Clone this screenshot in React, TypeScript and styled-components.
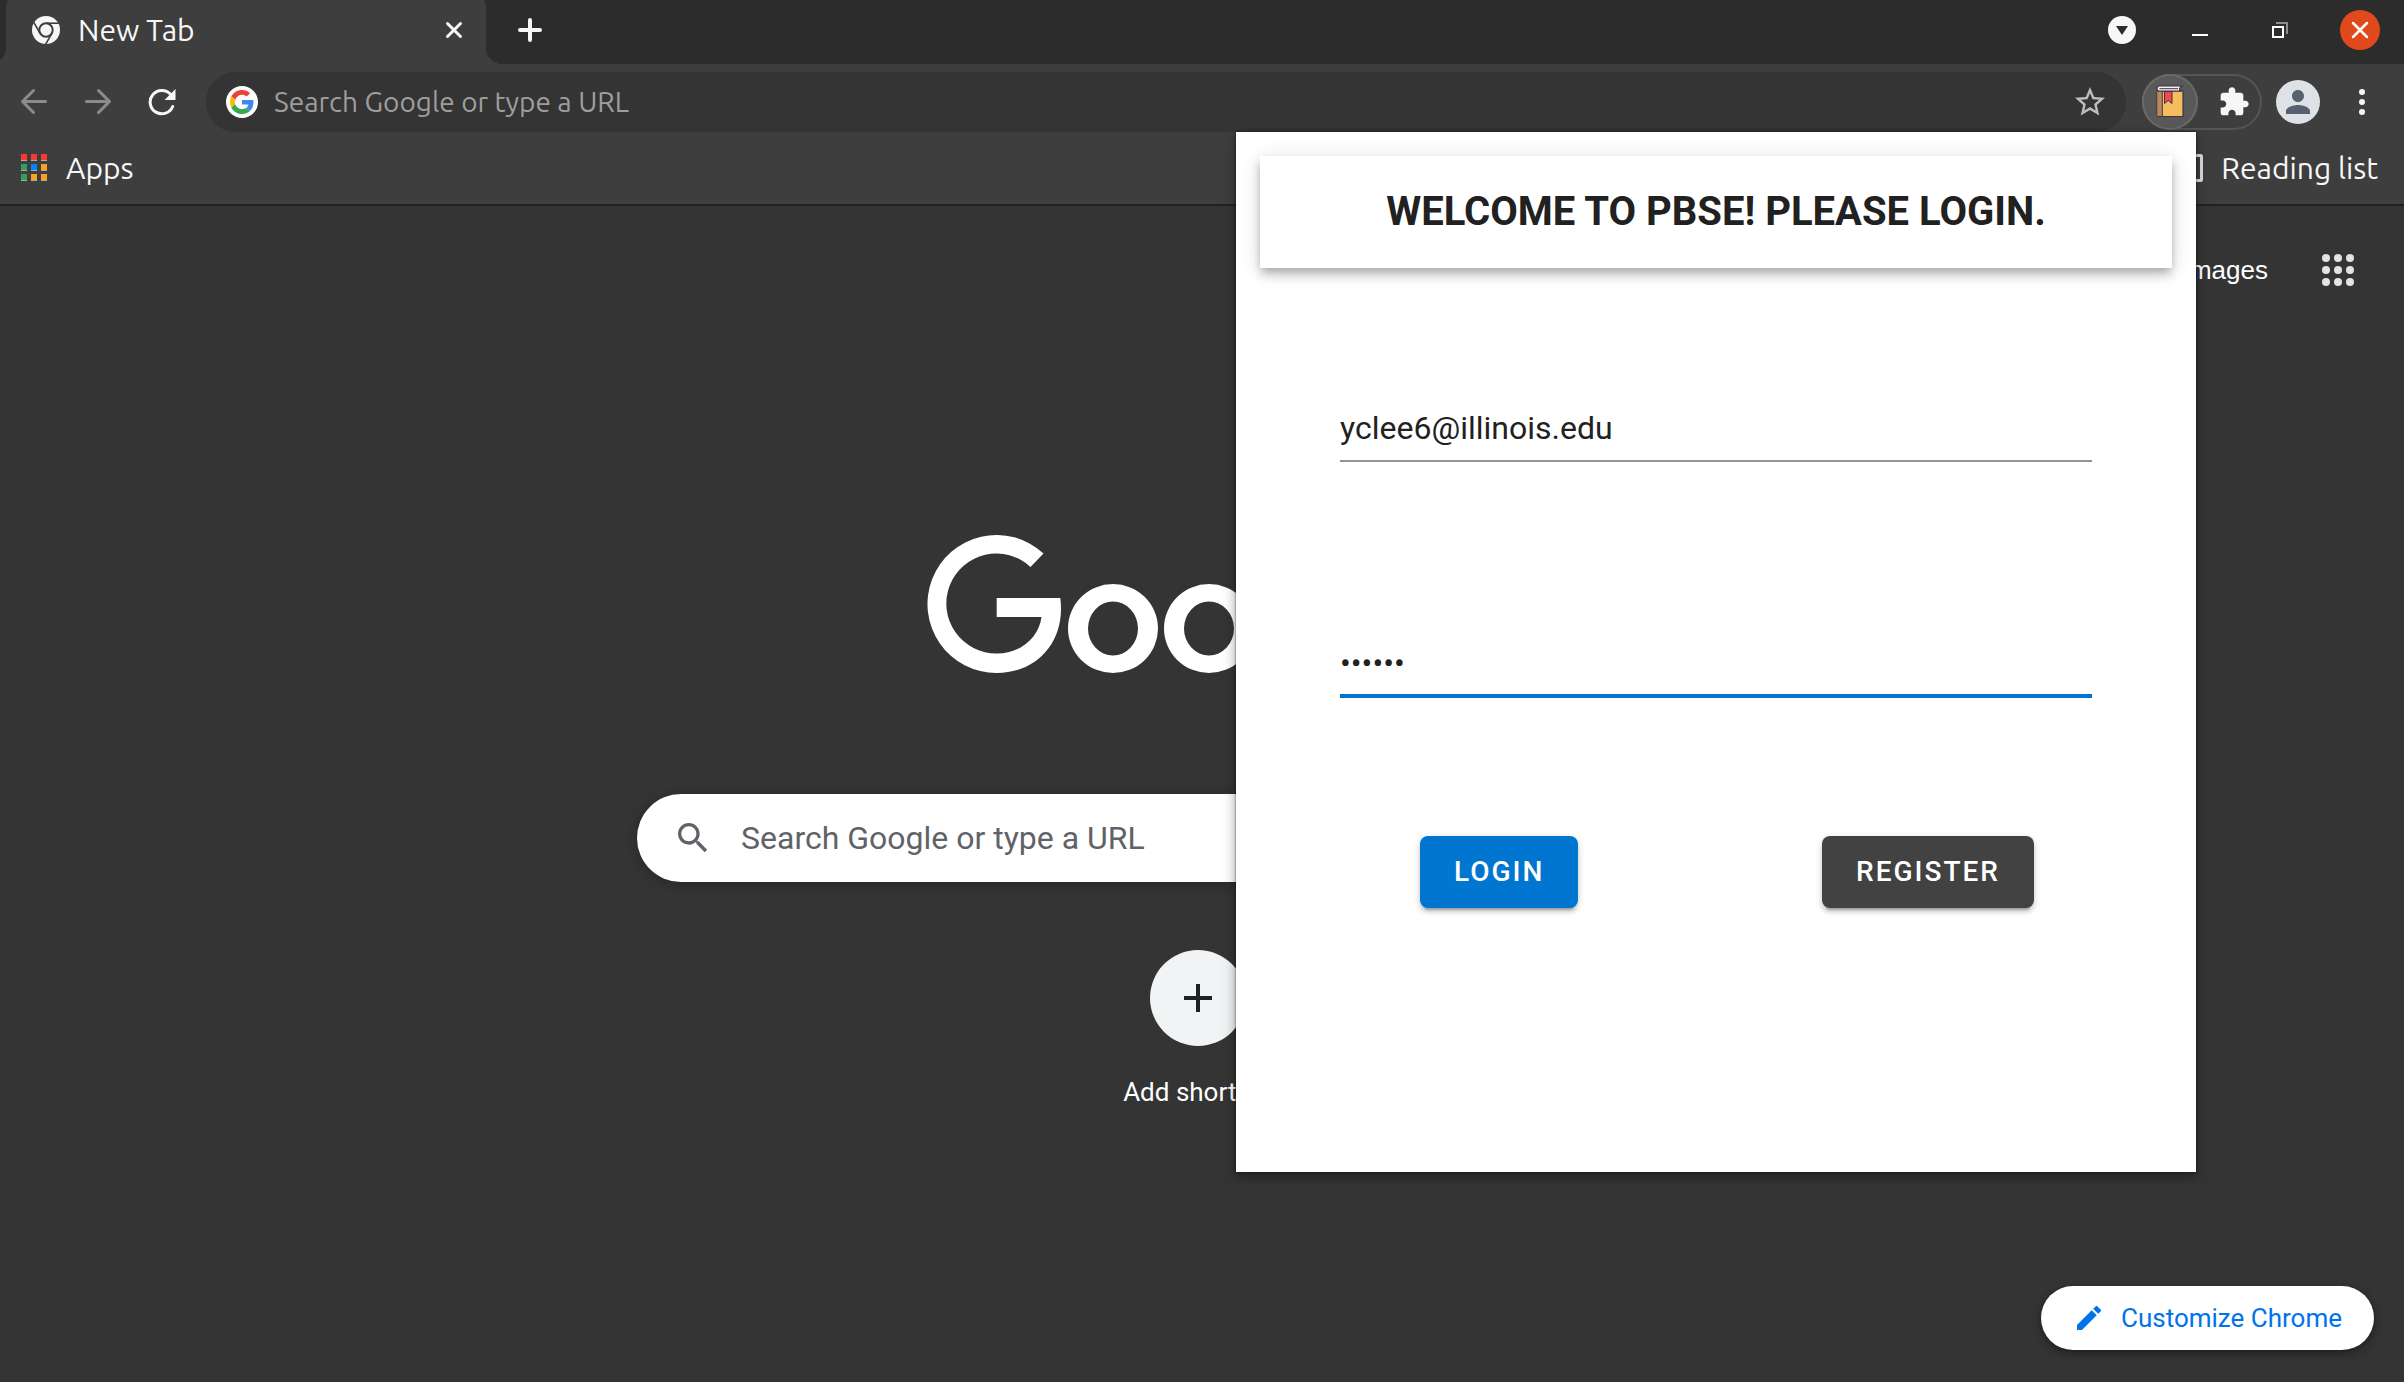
import React, { useState } from "react";
import styled, { createGlobalStyle } from "styled-components";

const ubuntu = `Ubuntu, "Noto Sans", "Open Sans", sans-serif`;
const roboto = `Roboto, "Liberation Sans", sans-serif`;
const arial = `"Liberation Sans", Arial, sans-serif`;

const GlobalStyle = createGlobalStyle`
  *, *::before, *::after { box-sizing: border-box; }
  body { margin: 0; background: #343434; }
  button, input { font: inherit; color: inherit; }
  button { padding: 0; border: 0; background: none; cursor: pointer; }
  svg { display: block; flex: none; }
`;

const Browser = styled.div`
  position: relative;
  display: flex;
  flex-direction: column;
  min-height: 100vh;
  overflow: hidden;
  color: #f7f7f7;
  font-family: ${ubuntu};
  font-size: 30px;
  line-height: 36px;
`;

const TabStrip = styled.header`
  display: flex;
  align-items: center;
  height: 64px;
  padding: 0 24px 4px 6px;
  overflow: hidden;
  background: #2c2c2c;
`;

const Tab = styled.div`
  position: relative;
  display: flex;
  align-items: center;
  width: 480px;
  height: 76px;
  padding: 0 22px 0 26px;
  border-radius: 16px 16px 0 0;
  background: #3e3e3e;

  &::before,
  &::after {
    content: "";
    position: absolute;
    bottom: 4px;
    width: 16px;
    height: 16px;
  }
  &::before {
    right: 100%;
    background: radial-gradient(circle at 0 0, transparent 16px, #3e3e3e 16px);
  }
  &::after {
    left: 100%;
    background: radial-gradient(circle at 100% 0, transparent 16px, #3e3e3e 16px);
  }
`;

const TabTitle = styled.span`
  flex: 1;
  margin-left: 18px;
`;

const IconButton = styled.button<{ $size?: number }>`
  display: flex;
  flex: none;
  align-items: center;
  justify-content: center;
  width: ${(p) => p.$size ?? 40}px;
  height: ${(p) => p.$size ?? 40}px;
  border-radius: 50%;
`;

const NewTabButton = styled(IconButton)`
  margin-left: 24px;
`;

const WindowControls = styled.div`
  display: flex;
  align-items: center;
  gap: 40px;
  margin-left: auto;
`;

const SearchTabs = styled(IconButton)`
  margin-right: -2px;
`;

const CloseWindow = styled(IconButton)`
  background: #e0491b;
`;

const Toolbar = styled.div`
  display: flex;
  align-items: center;
  height: 68px;
  padding: 8px 22px 0 14px;
  background: #3e3e3e;
`;

const NavButtons = styled.nav`
  display: flex;
  gap: 24px;
  margin-right: 24px;
`;

const Omnibox = styled.label`
  display: flex;
  flex: 1;
  align-items: center;
  height: 60px;
  padding: 0 16px 0 20px;
  border-radius: 30px;
  background: #343434;
  font-size: 28px;
`;

const OmniboxInput = styled.input`
  flex: 1;
  min-width: 0;
  margin: 0 16px;
  padding: 0;
  border: 0;
  outline: 0;
  background: none;

  &::placeholder {
    color: #9e9e9e;
    opacity: 1;
  }
`;

const Extensions = styled.div`
  display: flex;
  justify-content: space-between;
  width: 120px;
  height: 56px;
  margin: 0 14px 0 16px;
  border-radius: 28px;
  box-shadow: inset 0 0 0 2px #555555;
`;

const ActiveExtension = styled(IconButton)`
  background: #595959;
  box-shadow: inset 0 0 0 2px #696969;
`;

const Avatar = styled(IconButton)`
  margin-right: 22px;
  background: #dee1e6;
`;

const BookmarksBar = styled.nav`
  display: flex;
  align-items: center;
  justify-content: space-between;
  height: 74px;
  padding: 0 26px 0 20px;
  border-bottom: 2px solid #222222;
  background: #3e3e3e;
`;

const Bookmark = styled.button`
  display: flex;
  align-items: center;
  gap: 18px;
`;

const Page = styled.main`
  display: flex;
  flex: 1;
  flex-direction: column;
  align-items: center;
  padding: 0 30px 32px 22px;
  background: #343434;
  font-family: ${roboto};
`;

const PageLinks = styled.nav`
  display: flex;
  align-items: center;
  align-self: flex-end;
  gap: 50px;
  height: 128px;
  padding-right: 16px;
  font-family: ${arial};
  font-size: 26px;
`;

const PageLink = styled.a`
  color: #ffffff;
  text-decoration: none;
`;

const Logo = styled.svg`
  margin-top: 200px;
`;

const SearchBox = styled.label`
  display: flex;
  align-items: center;
  width: 1122px;
  max-width: 100%;
  height: 88px;
  margin-top: 120px;
  padding: 0 36px;
  border-radius: 44px;
  background: #ffffff;
  box-shadow: 0 2px 12px rgba(0, 0, 0, 0.28);
`;

const SearchInput = styled.input`
  flex: 1;
  min-width: 0;
  margin-left: 28px;
  padding: 0;
  border: 0;
  outline: 0;
  background: none;
  color: #202124;
  font-size: 32px;

  &::placeholder {
    color: #5f6368;
    opacity: 1;
  }
`;

const Shortcut = styled.button`
  display: flex;
  flex-direction: column;
  align-items: center;
  gap: 28px;
  margin-top: 68px;
  color: #ffffff;
  font-size: 26px;
`;

const ShortcutDisc = styled.span`
  display: flex;
  align-items: center;
  justify-content: center;
  width: 96px;
  height: 96px;
  border-radius: 50%;
  background: #f1f3f4;
`;

const Customize = styled.button`
  display: flex;
  align-items: center;
  align-self: flex-end;
  gap: 16px;
  height: 64px;
  margin-top: auto;
  padding: 0 32px;
  border-radius: 32px;
  background: #ffffff;
  box-shadow: 0 2px 6px rgba(0, 0, 0, 0.3), 0 4px 12px rgba(0, 0, 0, 0.2);
  color: #0073eb;
  font-size: 26px;
`;

const Popup = styled.section`
  position: absolute;
  top: 132px;
  right: 208px;
  display: flex;
  flex-direction: column;
  width: 960px;
  height: 1040px;
  padding: 24px;
  background: #ffffff;
  box-shadow: 0 0 2px rgba(0, 0, 0, 0.6), 0 4px 12px rgba(0, 0, 0, 0.4);
  color: #212121;
  font-family: ${roboto};
`;

const Banner = styled.h1`
  display: flex;
  align-items: center;
  justify-content: center;
  height: 112px;
  margin: 0;
  background: #ffffff;
  box-shadow: 0 4px 8px -2px rgba(0, 0, 0, 0.2), 0 8px 10px rgba(0, 0, 0, 0.14),
    0 2px 20px rgba(0, 0, 0, 0.12);
  font-size: 40px;
  font-weight: 700;
  line-height: 48px;
`;

const LoginForm = styled.form`
  display: flex;
  flex-direction: column;
  gap: 170px;
  padding: 128px 80px 0;
`;

const Field = styled.input<{ $active?: boolean }>`
  width: 100%;
  height: 66px;
  padding: 0 0 ${(p) => (p.$active ? 4 : 2)}px;
  border: 0;
  outline: 0;
  background: none;
  box-shadow: inset 0 ${(p) => (p.$active ? "-4px #0076d1" : "-2px #949494")};
  font-size: 32px;
`;

const Actions = styled.div`
  display: flex;
  justify-content: space-between;
  margin-top: -32px;
  padding: 0 58px 0 80px;
`;

const ActionButton = styled.button<{ $color: string }>`
  height: 72px;
  padding: 0 34px;
  border-radius: 8px;
  background: ${(p) => p.$color};
  box-shadow: 0 6px 2px -4px rgba(0, 0, 0, 0.2), 0 4px 4px rgba(0, 0, 0, 0.14),
    0 2px 10px rgba(0, 0, 0, 0.12);
  color: #ffffff;
  font-size: 28px;
  font-weight: 500;
  letter-spacing: 2px;
`;

const ChromeIcon = () => (
  <svg width="28" height="28" viewBox="0 0 28 28">
    <circle cx="14" cy="14" r="14" fill="#f7f7f7" />
    <circle cx="14" cy="14" r="6.7" fill="#f7f7f7" stroke="#3e3e3e" strokeWidth="2" />
    {[0, 120, 240].map((a) => (
      <path key={a} d="M14 7.2H27" stroke="#3e3e3e" strokeWidth="1.6" transform={`rotate(${a} 14 14)`} />
    ))}
  </svg>
);

const GoogleBadge = () => (
  <svg width="32" height="32" viewBox="0 0 32 32">
    <circle cx="16" cy="16" r="16" fill="#fff" />
    <g transform="translate(4 4) scale(.5)">
      <path fill="#EA4335" d="M24 9.5c3.54 0 6.71 1.22 9.21 3.6l6.85-6.85C35.9 2.38 30.47 0 24 0 14.62 0 6.51 5.38 2.56 13.22l7.98 6.19C12.43 13.72 17.74 9.5 24 9.5z" />
      <path fill="#4285F4" d="M46.98 24.55c0-1.57-.15-3.09-.38-4.55H24v9.02h12.94c-.58 2.96-2.26 5.48-4.78 7.18l7.73 6c4.51-4.18 7.09-10.36 7.09-17.65z" />
      <path fill="#FBBC05" d="M10.53 28.59c-.48-1.45-.76-2.99-.76-4.59s.27-3.14.76-4.59l-7.98-6.19C.92 16.46 0 20.12 0 24c0 3.88.92 7.54 2.56 10.78l7.97-6.19z" />
      <path fill="#34A853" d="M24 48c6.48 0 11.93-2.13 15.89-5.81l-7.73-6c-2.15 1.45-4.92 2.3-8.16 2.3-6.26 0-11.57-4.22-13.47-9.91l-7.98 6.19C6.51 42.62 14.62 48 24 48z" />
    </g>
  </svg>
);

const ArrowIcon = ({ forward }: { forward?: boolean }) => (
  <svg width="28" height="28" viewBox="0 0 28 28" fill="none" stroke="#8c8c8c" strokeWidth="3" strokeLinecap="round" strokeLinejoin="round">
    <path d={forward ? "M2.5 13.5H25.5M14.5 2.5L25.5 13.5L14.5 24.5" : "M25.5 13.5H2.5M13.5 2.5L2.5 13.5L13.5 24.5"} />
  </svg>
);

const Glyph = ({ d, size, color }: { d: string; size: number; color: string }) => (
  <svg width={size} height={size} viewBox="0 0 24 24" fill={color}>
    <path d={d} />
  </svg>
);

const paths = {
  star: "M22 9.24l-7.19-.62L12 2 9.19 8.63 2 9.24l5.46 4.73L5.82 21 12 17.27 18.18 21l-1.63-7.03L22 9.24zM12 15.4l-3.76 2.27 1-4.28-3.32-2.88 4.38-.38L12 6.1l1.71 4.04 4.38.38-3.32 2.88 1 4.28L12 15.4z",
  puzzle: "M20.5 11H19V7c0-1.1-.9-2-2-2h-4V3.5C13 2.12 11.88 1 10.5 1S8 2.12 8 3.5V5H4c-1.1 0-1.99.9-1.99 2v3.8H3.5c1.49 0 2.7 1.21 2.7 2.7s-1.21 2.7-2.7 2.7H2V20c0 1.1.9 2 2 2h3.8v-1.5c0-1.49 1.21-2.7 2.7-2.7 1.49 0 2.7 1.21 2.7 2.7V22H17c1.1 0 2-.9 2-2v-4h1.5c1.38 0 2.5-1.12 2.5-2.5S21.88 11 20.5 11z",
  person: "M12 12c2.21 0 4-1.79 4-4s-1.79-4-4-4-4 1.79-4 4 1.79 4 4 4zm0 2c-2.67 0-8 1.34-8 4v2h16v-2c0-2.66-5.33-4-8-4z",
  search: "M15.5 14h-.79l-.28-.27C15.41 12.59 16 11.11 16 9.5 16 5.91 13.09 3 9.5 3S3 5.91 3 9.5 5.91 16 9.5 16c1.61 0 3.09-.59 4.23-1.57l.27.28v.79l5 4.99L20.49 19l-4.99-5zm-6 0C7.01 14 5 11.99 5 9.5S7.01 5 9.5 5 14 7.01 14 9.5 11.99 14 9.5 14z",
  edit: "M3 17.25V21h3.75L17.81 9.94l-3.75-3.75L3 17.25zM20.71 7.04c.39-.39.39-1.02 0-1.41l-2.34-2.34c-.39-.39-1.02-.39-1.41 0l-1.83 1.83 3.75 3.75 1.83-1.83z",
};

const ReloadIcon = () => (
  <svg width="28" height="28" viewBox="0 0 28 28">
    <path d="M24.7 18.5A11.7 11.7 0 1 1 22.5 6.2" fill="none" stroke="#f7f7f7" strokeWidth="3" strokeLinecap="round" />
    <path d="M27.5 1V12H16.5z" fill="#f7f7f7" />
  </svg>
);

const BookIcon = () => (
  <svg width="28" height="34" viewBox="0 0 28 34">
    <path d="M1 6H27V31.5H2.5Q1 31.5 1 30z" fill="#f6bd5e" stroke="#3a3549" strokeWidth="1.2" />
    <path d="M1.5 6.5H6V31H2.5Q1.5 31 1.5 30z" fill="#bd8860" />
    <path d="M6.3 6.5V31" stroke="#3a3549" strokeWidth="1" />
    <path d="M26 1H3Q1 1 1 3.5T3 6.2H24.5Q22 3.5 26 1z" fill="#f7ece9" stroke="#3a3549" strokeWidth="1.2" />
    <path d="M3.5 3.7H22" stroke="#3a3549" strokeWidth="1" />
    <path d="M8.5 6.5H16V18.5L12.2 15.5L8.5 18.5z" fill="#f5474f" stroke="#3a3549" strokeWidth="1" />
  </svg>
);

const DotGrid = () => (
  <svg width="32" height="32" viewBox="0 0 32 32" fill="#e3e3e3">
    {[4, 16, 28].flatMap((y) => [4, 16, 28].map((x) => <circle key={`${x}-${y}`} cx={x} cy={y} r="4" />))}
  </svg>
);

const appColors = ["#f53b35", "#f53b35", "#f53b35", "#33a05a", "#0087f5", "#f7a31c", "#33a05a", "#f7a31c", "#f7a31c"];

const AppsIcon = () => (
  <svg width="28" height="28" viewBox="0 0 28 28">
    {appColors.map((c, i) => {
      const x = 1 + (i % 3) * 10;
      const y = Math.floor(i / 3) * 10;
      return (
        <g key={i}>
          <rect x={x} y={y + 1} width="6" height="6" fill="#a9a9a9" />
          <rect x={x} y={y} width="6" height="6" fill={c} />
        </g>
      );
    })}
  </svg>
);

const ring = (cx: number) =>
  `M${cx - 45} 94.5a45 44.5 0 1 0 90 0a45 44.5 0 1 0 -90 0zM${cx - 25} 94.5a25 27 0 1 0 50 0a25 27 0 1 0 -50 0z`;

export default function App() {
  const [email, setEmail] = useState("yclee6@illinois.edu");
  const [password, setPassword] = useState("secret");

  return (
    <Browser>
      <GlobalStyle />
      <TabStrip>
        <Tab>
          <ChromeIcon />
          <TabTitle>New Tab</TabTitle>
          <IconButton $size={20} aria-label="Close tab">
            <svg width="18" height="18" viewBox="0 0 18 18" stroke="#f7f7f7" strokeWidth="3" strokeLinecap="round">
              <path d="M2.5 2.5L15.5 15.5M15.5 2.5L2.5 15.5" />
            </svg>
          </IconButton>
        </Tab>
        <NewTabButton aria-label="New tab">
          <svg width="24" height="24" viewBox="0 0 24 24" stroke="#f7f7f7" strokeWidth="4" strokeLinecap="round">
            <path d="M12 2V22M2 12H22" />
          </svg>
        </NewTabButton>
        <WindowControls>
          <SearchTabs aria-label="Search tabs">
            <svg width="28" height="28" viewBox="0 0 28 28">
              <circle cx="14" cy="14" r="14" fill="#f7f7f7" />
              <path d="M8 10H20L14 19z" fill="#2c2c2c" />
            </svg>
          </SearchTabs>
          <IconButton aria-label="Minimize">
            <svg width="16" height="16" viewBox="0 0 16 16">
              <path d="M0 13H16" stroke="#fff" strokeWidth="2" />
            </svg>
          </IconButton>
          <IconButton aria-label="Restore">
            <svg width="16" height="16" viewBox="0 0 16 16" fill="none" strokeWidth="2">
              <path d="M4 1H15V12" stroke="#8e8e8e" />
              <rect x="1" y="5" width="10" height="10" stroke="#fff" />
            </svg>
          </IconButton>
          <CloseWindow aria-label="Close">
            <svg width="18" height="18" viewBox="0 0 18 18" stroke="#fff" strokeWidth="2.5" strokeLinecap="round">
              <path d="M2 2L16 16M16 2L2 16" />
            </svg>
          </CloseWindow>
        </WindowControls>
      </TabStrip>

      <Toolbar>
        <NavButtons aria-label="History">
          <IconButton aria-label="Back"><ArrowIcon /></IconButton>
          <IconButton aria-label="Forward"><ArrowIcon forward /></IconButton>
          <IconButton aria-label="Reload"><ReloadIcon /></IconButton>
        </NavButtons>
        <Omnibox>
          <GoogleBadge />
          <OmniboxInput aria-label="Address" placeholder="Search Google or type a URL" />
          <IconButton aria-label="Bookmark this tab">
            <Glyph d={paths.star} size={36} color="#bdbdbd" />
          </IconButton>
        </Omnibox>
        <Extensions>
          <ActiveExtension $size={56} aria-label="PBSE extension"><BookIcon /></ActiveExtension>
          <IconButton $size={56} aria-label="Extensions">
            <Glyph d={paths.puzzle} size={32} color="#f7f7f7" />
          </IconButton>
        </Extensions>
        <Avatar $size={44} aria-label="Profile">
          <Glyph d={paths.person} size={36} color="#56606f" />
        </Avatar>
        <IconButton aria-label="Menu">
          <svg width="6" height="26" viewBox="0 0 6 26" fill="#f7f7f7">
            <circle cx="3" cy="3" r="3" />
            <circle cx="3" cy="13" r="3" />
            <circle cx="3" cy="23" r="3" />
          </svg>
        </IconButton>
      </Toolbar>

      <BookmarksBar aria-label="Bookmarks">
        <Bookmark><AppsIcon />Apps</Bookmark>
        <Bookmark>
          <svg width="28" height="28" viewBox="0 0 28 28" fill="none" stroke="#e0e0e0" strokeWidth="3">
            <rect x="1.5" y="1.5" width="25" height="25" rx="1" />
            <path d="M7 9H19M7 14H19M7 19H14" />
          </svg>
          Reading list
        </Bookmark>
      </BookmarksBar>

      <Page>
        <PageLinks aria-label="Google">
          <PageLink href="#images">Images</PageLink>
          <IconButton aria-label="Google apps"><DotGrid /></IconButton>
        </PageLinks>
        <Logo width="544" height="140" viewBox="0 0 544 140" fill="#fff" fillRule="evenodd" role="img" aria-label="Google">
          <path d="M117.500 19.500A69 69 0 1 0 71 139C108 139 135 112 135 75Q135 69 134.300 64H70.700V83H115.500C113 103 95 119.500 71 119.500A50 50 0 1 1 104.500 33z" />
          <path d={ring(187)} />
          <path d={ring(283)} />
        </Logo>
        <SearchBox>
          <Glyph d={paths.search} size={40} color="#5f6368" />
          <SearchInput aria-label="Search" placeholder="Search Google or type a URL" />
        </SearchBox>
        <Shortcut>
          <ShortcutDisc>
            <svg width="28" height="28" viewBox="0 0 28 28" stroke="#202124" strokeWidth="4">
              <path d="M14 0V28M0 14H28" />
            </svg>
          </ShortcutDisc>
          Add shortcut
        </Shortcut>
        <Customize>
          <Glyph d={paths.edit} size={32} color="#0073eb" />
          Customize Chrome
        </Customize>
      </Page>

      <Popup aria-label="PBSE login">
        <Banner>WELCOME TO PBSE! PLEASE LOGIN.</Banner>
        <LoginForm onSubmit={(e) => e.preventDefault()}>
          <Field type="email" aria-label="Email" value={email} onChange={(e) => setEmail(e.target.value)} />
          <Field $active type="password" aria-label="Password" value={password} onChange={(e) => setPassword(e.target.value)} />
          <Actions>
            <ActionButton $color="#0076d1" type="submit">LOGIN</ActionButton>
            <ActionButton $color="#424242" type="button">REGISTER</ActionButton>
          </Actions>
        </LoginForm>
      </Popup>
    </Browser>
  );
}
